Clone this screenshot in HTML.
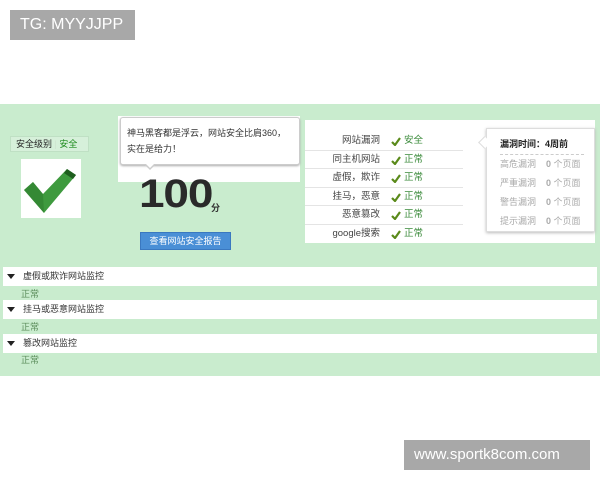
<!DOCTYPE html>
<html><head><meta charset="utf-8"><style>
*{margin:0;padding:0;box-sizing:border-box}
body{width:600px;height:480px;background:#fff;position:relative;overflow:hidden;font-family:"Liberation Sans","Noto Sans CJK SC",sans-serif;font-size:9px;color:#333}
.a{position:absolute}
.tag{background:#a8a8a8;color:#fff;font-size:16px;line-height:30px;padding-left:10px}
.g{background:#c9ecce}
.w{background:#fff}
.row{position:absolute;left:305px;width:158px;height:18.5px;border-bottom:1px solid #e4e4e4;line-height:18px}
.row .l{position:absolute;right:83px;color:#444;font-size:9.5px;white-space:nowrap}
.row .c{position:absolute;left:86px;top:5px}
.row .s{position:absolute;left:99px;color:#3a8a3a;font-size:9.5px}
.bar{position:absolute;left:3px;width:594px;height:19px;background:#fff;line-height:19px;padding-left:20px;font-size:9px;color:#333}
.bar:before{content:"";position:absolute;left:4px;top:7px;border-left:4px solid transparent;border-right:4px solid transparent;border-top:5px solid #222}
.ok{position:absolute;left:21px;font-size:9px;line-height:12px;color:#5b8d5b}
.p div{height:19px;line-height:19px;color:#aaa;font-size:9px}
.p b{color:#aaa;margin-left:10px}
</style></head><body>
<div class="a tag" style="left:10px;top:10px;width:125px;height:30px">TG: MYYJJPP</div>
<div class="a g" style="left:0;top:104px;width:600px;height:272px"></div>
<div class="a" style="left:10px;top:136px;width:79px;height:16px;background:#d6f0da;border:1px solid #bfe0c4;font-size:9px;line-height:14px;white-space:nowrap"><span style="padding-left:5px;color:#222">安全级别</span><span style="color:#cfe3cf"> | </span><span style="color:#1a8a1a">安全</span></div>
<div class="a w" style="left:21px;top:159px;width:60px;height:59px">
<svg width="60" height="59" viewBox="0 0 60 59"><path d="M3 31 L12 23 L22 35 L46 10 L55 16 L23 54 Z" fill="#3e9a3e"/><path d="M46 10 L55 16 L52 20 L43 14 Z" fill="#1f5e1f"/><path d="M12 23 L22 35 L23 54 L3 31Z" fill="#2f7f2f" opacity=".6"/></svg></div>
<div class="a w" style="left:118px;top:116px;width:182px;height:66px"></div>
<div class="a w" style="left:120px;top:117px;width:180px;height:48px;border:1px solid #ccc;border-radius:3px;box-shadow:0 1px 2px #aaa;padding:7px 4px 7px 6px;font-size:9px;line-height:16px;color:#333;white-space:nowrap">神马黑客都是浮云，网站安全比肩360，<br>实在是给力！</div>
<div class="a" style="left:144px;top:164px;width:0;height:0;border-left:6px solid transparent;border-right:6px solid transparent;border-top:6px solid #ccc"></div>
<div class="a" style="left:145px;top:163px;width:0;height:0;border-left:5px solid transparent;border-right:5px solid transparent;border-top:5px solid #fff"></div>
<div class="a" style="left:139px;top:172px;font-size:40px;font-weight:bold;color:#2a2a2a;letter-spacing:-1px;transform:scaleX(1.15);transform-origin:0 0">100</div>
<div class="a" style="left:211px;top:201px;font-size:9px;font-weight:bold">分</div>
<div class="a" style="left:140px;top:232px;width:91px;height:18px;background:#4a8fd6;border:1px solid #3a78c0;color:#fff;font-size:9px;line-height:16px;text-align:center">查看网站安全报告</div>
<div class="a w" style="left:305px;top:120px;width:290px;height:123px"></div>
<div class="row" style="top:132px"><span class="l">网站漏洞</span><svg class="c" width="10" height="9"><path d="M1 5 L4 8 L9 1" stroke="#5a8a1a" stroke-width="2.2" fill="none"/></svg><span class="s">安全</span></div>
<div class="row" style="top:150.5px"><span class="l">同主机网站</span><svg class="c" width="10" height="9"><path d="M1 5 L4 8 L9 1" stroke="#5a8a1a" stroke-width="2.2" fill="none"/></svg><span class="s">正常</span></div>
<div class="row" style="top:169px"><span class="l">虚假，欺诈</span><svg class="c" width="10" height="9"><path d="M1 5 L4 8 L9 1" stroke="#5a8a1a" stroke-width="2.2" fill="none"/></svg><span class="s">正常</span></div>
<div class="row" style="top:187.5px"><span class="l">挂马，恶意</span><svg class="c" width="10" height="9"><path d="M1 5 L4 8 L9 1" stroke="#5a8a1a" stroke-width="2.2" fill="none"/></svg><span class="s">正常</span></div>
<div class="row" style="top:206px"><span class="l">恶意篡改</span><svg class="c" width="10" height="9"><path d="M1 5 L4 8 L9 1" stroke="#5a8a1a" stroke-width="2.2" fill="none"/></svg><span class="s">正常</span></div>
<div class="row" style="top:224.5px;border:0"><span class="l">google搜索</span><svg class="c" width="10" height="9"><path d="M1 5 L4 8 L9 1" stroke="#5a8a1a" stroke-width="2.2" fill="none"/></svg><span class="s">正常</span></div>
<div class="a w" style="left:486px;top:128px;width:109px;height:104px;border:1px solid #ddd;box-shadow:0 1px 3px #bbb;padding:5px 0 0 13px">
<div style="font-size:9px;font-weight:bold;color:#222;line-height:20px;border-bottom:1px dashed #ccc;margin-right:10px">漏洞时间：4周前</div>
<div class="p"><div>高危漏洞<b>0</b> 个页面</div><div>严重漏洞<b>0</b> 个页面</div><div>警告漏洞<b>0</b> 个页面</div><div>提示漏洞<b>0</b> 个页面</div></div></div>
<div class="a" style="left:480px;top:138px;width:9px;height:9px;background:#fff;border-left:1px solid #ddd;border-bottom:1px solid #ddd;transform:rotate(45deg)"></div>
<div class="bar" style="top:267px">虚假或欺诈网站监控</div>
<div class="ok" style="top:288px">正常</div>
<div class="bar" style="top:300px">挂马或恶意网站监控</div>
<div class="ok" style="top:321px">正常</div>
<div class="bar" style="top:334px">篡改网站监控</div>
<div class="ok" style="top:354px">正常</div>
<div class="a tag" style="left:404px;top:440px;width:186px;height:30px;font-size:15px">www.sportk8com.com</div>
</body></html>
